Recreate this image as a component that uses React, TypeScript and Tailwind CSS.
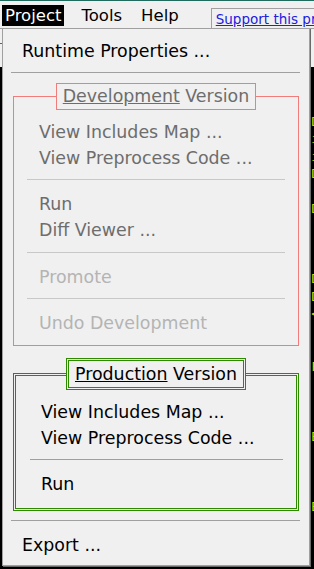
const editorLines: [string, string][] = [
  ["", ""],
  [";", "D"],
  [";", "i"],
  [";", "i"],
  [";", "D"],
  [";", ""],
  [";", "D"],
  [";", ""],
  ["", ""],
  ["", ""],
  [";", "D"],
  [";", "D"],
  [":", "<"],
  ["", ""],
  [";", ""],
  [":", "F"],
  ["", ""],
  ["", ""],
  [";", ""],
  [";", "B"],
  ["", ""],
  ["", ""],
  [";", ""],
  [";", "B"],
  ["", ""],
  ["", ""],
];

function Item({ label, tone }: { label: string; tone: "on" | "dim" | "off" }) {
  const color =
    tone === "on" ? "text-[#000000]" : tone === "dim" ? "text-[#6d6d6d]" : "text-[#b4b4b4]";
  return <div className={`h-[26px] leading-[26px] whitespace-nowrap ${color}`}>{label}</div>;
}

function Sep({ light }: { light?: boolean }) {
  return <div className={`h-px ${light ? "bg-[#c8c8c8]" : "bg-[#a0a0a0]"}`} />;
}

export default function App() {
  return (
    <div className="relative w-[314px] h-[569px] overflow-hidden bg-black font-['DejaVu_Sans',sans-serif]">
      {/* menubar */}
      <div className="h-[29px] bg-[#f0f0f0] border-t border-[#1f6b5e] border-b border-b-[#a0a0a0] flex items-start text-[16.5px] text-black">
        <span className="ml-[2px] mt-[4px] h-[21px] leading-[21px] px-[3px] bg-black text-white">Project</span>
        <span className="ml-[17px] mt-[4px] leading-[21px]">Tools</span>
        <span className="ml-[19px] mt-[4px] leading-[21px]">Help</span>
        <span className="ml-[32px] mt-[7px] pl-[4px] pt-[1px] h-[30px] border-l border-t border-[#a0a0a0] text-[13.5px] leading-[18px] text-[#2020e0] underline whitespace-nowrap">
          Support this project
        </span>
      </div>

      {/* strip + editor behind the menu */}
      <div className="h-[38px] bg-[#f0f0f0] pt-[14px]">
        <div className="w-[10px] h-px bg-[#2a7a6a]" />
      </div>
      <div className="pt-[28px] flex flex-col font-['DejaVu_Sans_Mono',monospace] text-[13px] text-[#d8d800]">
        {editorLines.map(([l, r], i) => (
          <div key={i} className="h-[17.5px] leading-[17.5px] flex justify-between">
            <span className="-ml-[6px]">{l}</span>
            <span className="-mr-[5px]">{r}</span>
          </div>
        ))}
      </div>

      {/* dropdown */}
      <div className="absolute left-[2px] top-[28px] w-[308px] h-[538px] bg-[#f0f0f0] border border-[#a0a0a0] shadow-[1px_1px_0_#6a6a6a] text-[17.4px]">
        <div className="h-[44px] leading-[44px] pl-[19px] text-black">Runtime Properties ...</div>
        <div className="ml-[8px] mr-[9px] -mt-px">
          <Sep />
        </div>

        <fieldset className="mt-[10px] mx-[10px] border border-[#f07c7c] pt-[9px] pb-[9px] px-0 min-w-0">
          <legend className="mx-auto p-0">
            <span className="block border border-[#f07c7c] px-[6px] h-[27px] leading-[25px] text-[#6d6d6d]">
              <span className="underline">Development</span> Version
            </span>
          </legend>
          <div className="pl-[25px]">
            <Item label="View Includes Map ..." tone="dim" />
            <Item label="View Preprocess Code ..." tone="dim" />
          </div>
          <div className="mx-[13px] mt-[8px] mb-[11px]">
            <Sep light />
          </div>
          <div className="pl-[25px]">
            <Item label="Run" tone="dim" />
            <Item label="Diff Viewer ..." tone="dim" />
          </div>
          <div className="mx-[13px] mt-[9px] mb-[11px]">
            <Sep light />
          </div>
          <div className="pl-[25px]">
            <Item label="Promote" tone="off" />
          </div>
          <div className="mx-[13px] mt-[8px] mb-[11px]">
            <Sep light />
          </div>
          <div className="pl-[25px]">
            <Item label="Undo Development" tone="off" />
          </div>
        </fieldset>

        <fieldset className="mt-[12px] mx-[10px] border-[3px] border-double border-[#2e8b00] pt-[9px] pb-[11px] px-0 min-w-0">
          <legend className="mx-auto p-0">
            <span className="block border-[3px] border-double border-[#2e8b00] px-[6px] h-[32px] leading-[26px] text-black">
              <span className="underline">Production</span> Version
            </span>
          </legend>
          <div className="pl-[25px]">
            <Item label="View Includes Map ..." tone="on" />
            <Item label="View Preprocess Code ..." tone="on" />
          </div>
          <div className="ml-[14px] mr-[13px] mt-[8px] mb-[11px]">
            <Sep />
          </div>
          <div className="pl-[25px]">
            <Item label="Run" tone="on" />
          </div>
        </fieldset>

        <div className="ml-[8px] mr-[9px] mt-[9px]">
          <Sep />
        </div>
        <div className="mt-[11px] pl-[19px]">
          <Item label="Export ..." tone="on" />
        </div>
      </div>
    </div>
  );
}
